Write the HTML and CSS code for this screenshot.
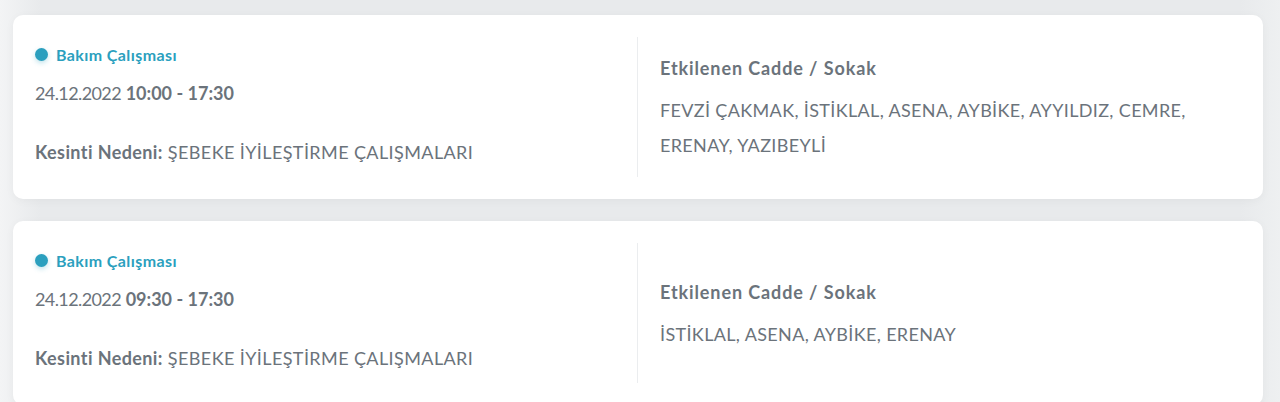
FILE: index.html
```
<!DOCTYPE html>
<html lang="tr">
<head>
<meta charset="utf-8">
<link rel="stylesheet" href="styles.css">
</head>
<body>
<div class="list">
  <div class="card">
    <div class="left">
      <div class="status"><span class="dot"></span>Bakım Çalışması</div>
      <div class="date"><span class="day">24.12.2022</span> <b>10:00 - 17:30</b></div>
      <div class="reason"><b>Kesinti Nedeni:</b> ŞEBEKE İYİLEŞTİRME ÇALIŞMALARI</div>
    </div>
    <div class="right">
      <div class="title">Etkilenen Cadde / Sokak</div>
      <div class="streets">FEVZİ ÇAKMAK, İSTİKLAL, ASENA, AYBİKE, AYYILDIZ, CEMRE, ERENAY, YAZIBEYLİ</div>
    </div>
  </div>
  <div class="card">
    <div class="left">
      <div class="status"><span class="dot"></span>Bakım Çalışması</div>
      <div class="date"><span class="day">24.12.2022</span> <b>09:30 - 17:30</b></div>
      <div class="reason"><b>Kesinti Nedeni:</b> ŞEBEKE İYİLEŞTİRME ÇALIŞMALARI</div>
    </div>
    <div class="right">
      <div class="title">Etkilenen Cadde / Sokak</div>
      <div class="streets">İSTİKLAL, ASENA, AYBİKE, ERENAY</div>
    </div>
  </div>
</div>
</body>
</html>
```
FILE: styles.css
```
html, body {
  margin: 0;
  padding: 0;
}
body {
  background: linear-gradient(90deg, #f3f4f5 0px, #e8eaec 40px, #e8eaec 1240px, #eef0f1 1280px);
  font-family: Lato, "Open Sans", sans-serif;
  color: #6b737b;
  height: 402px;
  overflow: hidden;
}
.list {
  padding: 15px 17px 0 13px;
  display: flex;
  flex-direction: column;
  gap: 22px;
}
.card {
  background: #fff;
  border-radius: 10px;
  box-shadow: 0 2px 10px rgba(0, 0, 0, 0.04);
  display: flex;
  padding: 22px 0;
  height: 140px;
}
.left {
  width: 602px;
  padding-left: 22px;
  display: flex;
  flex-direction: column;
  border-right: 1px solid #ebedef;
}
.status {
  display: flex;
  align-items: center;
  font-size: 16px;
  letter-spacing: 0.4px;
  font-weight: 700;
  color: #2b9fbe;
  margin-top: 9px;
  height: 17px;
}
.dot {
  width: 13px;
  height: 13px;
  border-radius: 50%;
  background: #2b9fbe;
  margin-right: 8px;
  box-shadow: 0 2px 5px rgba(43, 159, 190, 0.3);
}
.date {
  font-size: 18px;
  margin-top: 19px;
  line-height: 22px;
}
.day {
  letter-spacing: -0.6px;
}
.date b {
  font-weight: 700;
}
.reason {
  font-size: 18px;
  margin-top: 37px;
  line-height: 22px;
  letter-spacing: 0.4px;
}
.right {
  flex: 1;
  padding-left: 22px;
  padding-right: 40px;
  padding-top: 6px;
  display: flex;
  flex-direction: column;
  justify-content: center;
}
.title {
  font-size: 18px;
  font-weight: 700;
  line-height: 22px;
  letter-spacing: 0.9px;
}
.streets {
  font-size: 18px;
  line-height: 35px;
  margin-top: 14px;
  letter-spacing: 0.35px;
}
```
